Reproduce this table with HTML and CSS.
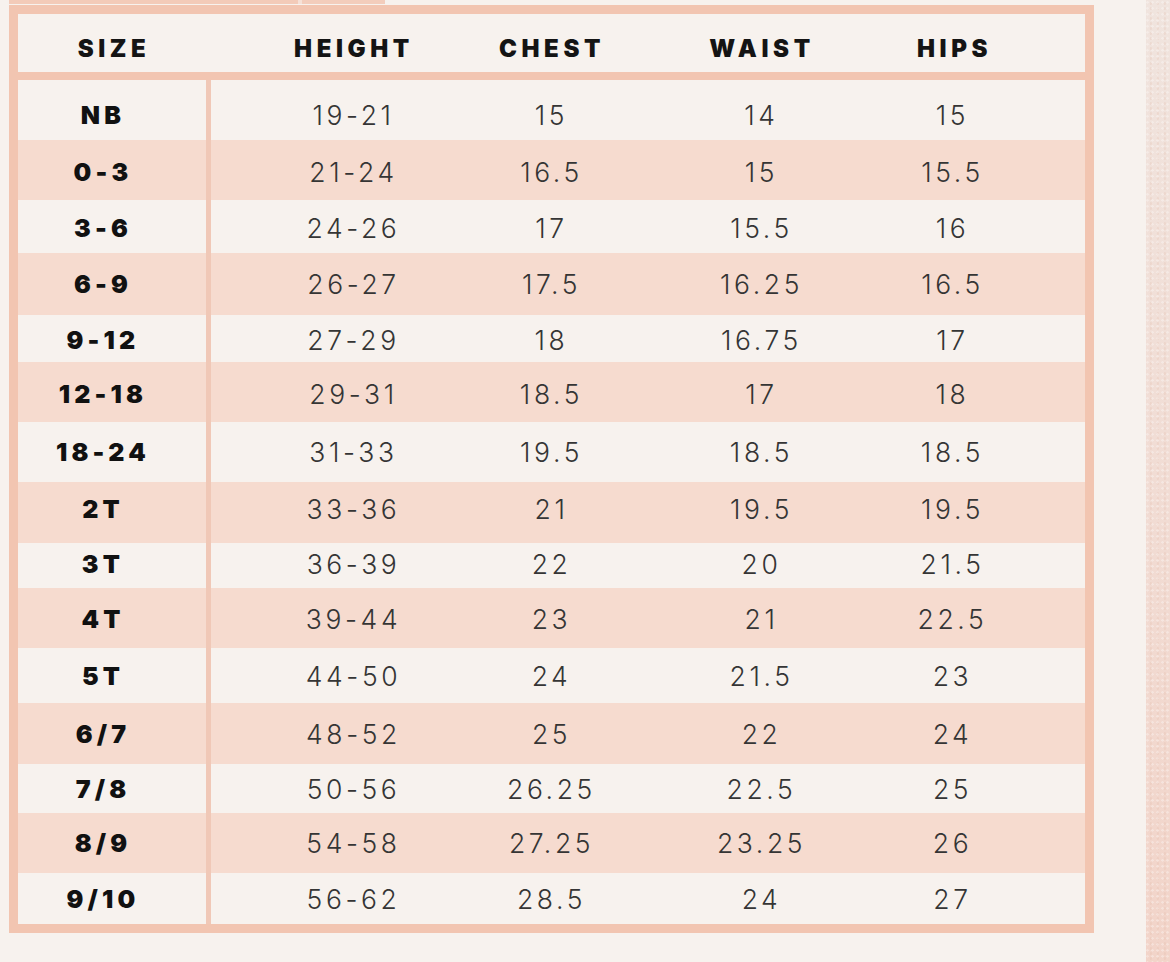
FILE: index.html
```html
<!DOCTYPE html>
<html lang="en">
<head>
<meta charset="utf-8">
<title>Size Chart</title>
<link rel="stylesheet" href="styles.css">
</head>
<body>
<div class="page">
  <main class="main">
    <div class="top-strip">
      <span class="ts-a"></span><span class="ts-b"></span><span class="ts-c"></span>
    </div>
    <section class="chart">
      <div class="head">
        <div class="h size-h">SIZE</div>
        <div class="spacer"></div>
        <div class="h">HEIGHT</div>
        <div class="h">CHEST</div>
        <div class="h">WAIST</div>
        <div class="h">HIPS</div>
        <div></div>
      </div>
      <div class="body">
        <div class="row"><div class="size">NB</div><div class="div"></div><div class="v">19-21</div><div class="v">15</div><div class="v">14</div><div class="v">15</div><div></div></div>
        <div class="row"><div class="size">0-3</div><div class="div"></div><div class="v">21-24</div><div class="v">16.5</div><div class="v">15</div><div class="v">15.5</div><div></div></div>
        <div class="row"><div class="size">3-6</div><div class="div"></div><div class="v">24-26</div><div class="v">17</div><div class="v">15.5</div><div class="v">16</div><div></div></div>
        <div class="row"><div class="size">6-9</div><div class="div"></div><div class="v">26-27</div><div class="v">17.5</div><div class="v">16.25</div><div class="v">16.5</div><div></div></div>
        <div class="row"><div class="size">9-12</div><div class="div"></div><div class="v">27-29</div><div class="v">18</div><div class="v">16.75</div><div class="v">17</div><div></div></div>
        <div class="row"><div class="size">12-18</div><div class="div"></div><div class="v">29-31</div><div class="v">18.5</div><div class="v">17</div><div class="v">18</div><div></div></div>
        <div class="row"><div class="size">18-24</div><div class="div"></div><div class="v">31-33</div><div class="v">19.5</div><div class="v">18.5</div><div class="v">18.5</div><div></div></div>
        <div class="row"><div class="size">2T</div><div class="div"></div><div class="v">33-36</div><div class="v">21</div><div class="v">19.5</div><div class="v">19.5</div><div></div></div>
        <div class="row"><div class="size">3T</div><div class="div"></div><div class="v">36-39</div><div class="v">22</div><div class="v">20</div><div class="v">21.5</div><div></div></div>
        <div class="row"><div class="size">4T</div><div class="div"></div><div class="v">39-44</div><div class="v">23</div><div class="v">21</div><div class="v">22.5</div><div></div></div>
        <div class="row"><div class="size">5T</div><div class="div"></div><div class="v">44-50</div><div class="v">24</div><div class="v">21.5</div><div class="v">23</div><div></div></div>
        <div class="row"><div class="size">6/7</div><div class="div"></div><div class="v">48-52</div><div class="v">25</div><div class="v">22</div><div class="v">24</div><div></div></div>
        <div class="row"><div class="size">7/8</div><div class="div"></div><div class="v">50-56</div><div class="v">26.25</div><div class="v">22.5</div><div class="v">25</div><div></div></div>
        <div class="row"><div class="size">8/9</div><div class="div"></div><div class="v">54-58</div><div class="v">27.25</div><div class="v">23.25</div><div class="v">26</div><div></div></div>
        <div class="row"><div class="size">9/10</div><div class="div"></div><div class="v">56-62</div><div class="v">28.5</div><div class="v">24</div><div class="v">27</div><div></div></div>
      </div>
    </section>
  </main>
  <aside class="edge"></aside>
</div>
</body>
</html>
```
FILE: styles.css
```css
:root {
  --frame: #f2c5b1;
  --stripe: #f6dbcf;
  --paper: #f7f2ee;
  --divider: #f0c8b7;
  --cols: 188px 5px 282px 114px 306px 76px 1fr;
}

* { box-sizing: border-box; }

html, body {
  margin: 0;
  padding: 0;
  background: var(--paper);
}

.page {
  display: flex;
  width: 1170px;
  height: 962px;
  overflow: hidden;
}

.main {
  flex: 1;
  display: flex;
  flex-direction: column;
}

.edge {
  width: 24px;
  margin-left: 52px;
  background:
    radial-gradient(circle at 30% 40%, rgba(255,255,255,0.3) 0 1px, transparent 1.5px) 0 0 / 5px 6px,
    radial-gradient(circle at 70% 70%, rgba(220,170,150,0.18) 0 1px, transparent 1.5px) 0 0 / 7px 5px,
    linear-gradient(180deg, #f0e4de 0%, #f1ddd5 45%, #f2d4c9 100%);
}

.top-strip {
  display: flex;
  height: 4px;
  margin-left: 9px;
}
.ts-a { width: 289px; background: #f3cbb9; }
.ts-b { width: 4px; background: #f6e1d7; }
.ts-c { width: 83px; background: #f3cdbc; }

.chart {
  margin: 1px 0 0 9px;
  width: 1085px;
  border: 9px solid var(--frame);
  background: var(--frame);
  display: flex;
  flex-direction: column;
  gap: 8px;
}

.head {
  height: 58px;
  background: var(--paper);
  display: grid;
  grid-template-columns: var(--cols);
  align-items: center;
  padding-top: 10px;
}

.h {
  text-align: center;
  font-family: "Inter", "Liberation Sans", sans-serif;
  font-weight: 900;
  font-size: 24px;
  letter-spacing: 4.6px;
  color: #141414;
  padding-left: 4px;
}

.body {
  display: flex;
  flex-direction: column;
}

.row {
  display: grid;
  grid-template-columns: var(--cols);
  align-items: center;
  background: var(--paper);
}
.row:nth-child(even) { background: var(--stripe); }

.row:nth-child(1)  { height: 60px; padding-top: 10px; }
.row:nth-child(2)  { height: 60px; padding-top: 3px; }
.row:nth-child(3)  { height: 53px; padding-top: 2px; }
.row:nth-child(4)  { height: 62px; }
.row:nth-child(5)  { height: 47px; padding-top: 2px; }
.row:nth-child(6)  { height: 60px; padding-top: 4px; }
.row:nth-child(7)  { height: 60px; }
.row:nth-child(8)  { height: 61px; padding-bottom: 8px; }
.row:nth-child(9)  { height: 45px; padding-bottom: 3px; }
.row:nth-child(10) { height: 60px; padding-top: 2px; }
.row:nth-child(11) { height: 55px; }
.row:nth-child(12) { height: 61px; }
.row:nth-child(13) { height: 49px; }
.row:nth-child(14) { height: 60px; }
.row:nth-child(15) { height: 51px; }

.row > * { align-self: center; }
.row > .div {
  align-self: stretch;
  background: var(--divider);
}
.row:nth-child(1) > .div { margin-top: -10px; }
.row:nth-child(2) > .div { margin-top: -3px; }
.row:nth-child(3) > .div { margin-top: -2px; }
.row:nth-child(5) > .div { margin-top: -2px; }
.row:nth-child(6) > .div { margin-top: -4px; }
.row:nth-child(8) > .div { margin-bottom: -8px; }
.row:nth-child(9) > .div { margin-bottom: -3px; }
.row:nth-child(10) > .div { margin-top: -2px; }

.size {
  text-align: center;
  font-family: "Inter", "Liberation Sans", sans-serif;
  font-weight: 900;
  font-size: 25px;
  letter-spacing: 4.2px;
  color: #111;
  padding-right: 18px;
}

.v {
  text-align: center;
  font-family: "Inter", "Liberation Sans", sans-serif;
  font-weight: 350;
  font-size: 26.5px;
  letter-spacing: 3.6px;
  color: #353535;
  padding-left: 3px;
}
```
